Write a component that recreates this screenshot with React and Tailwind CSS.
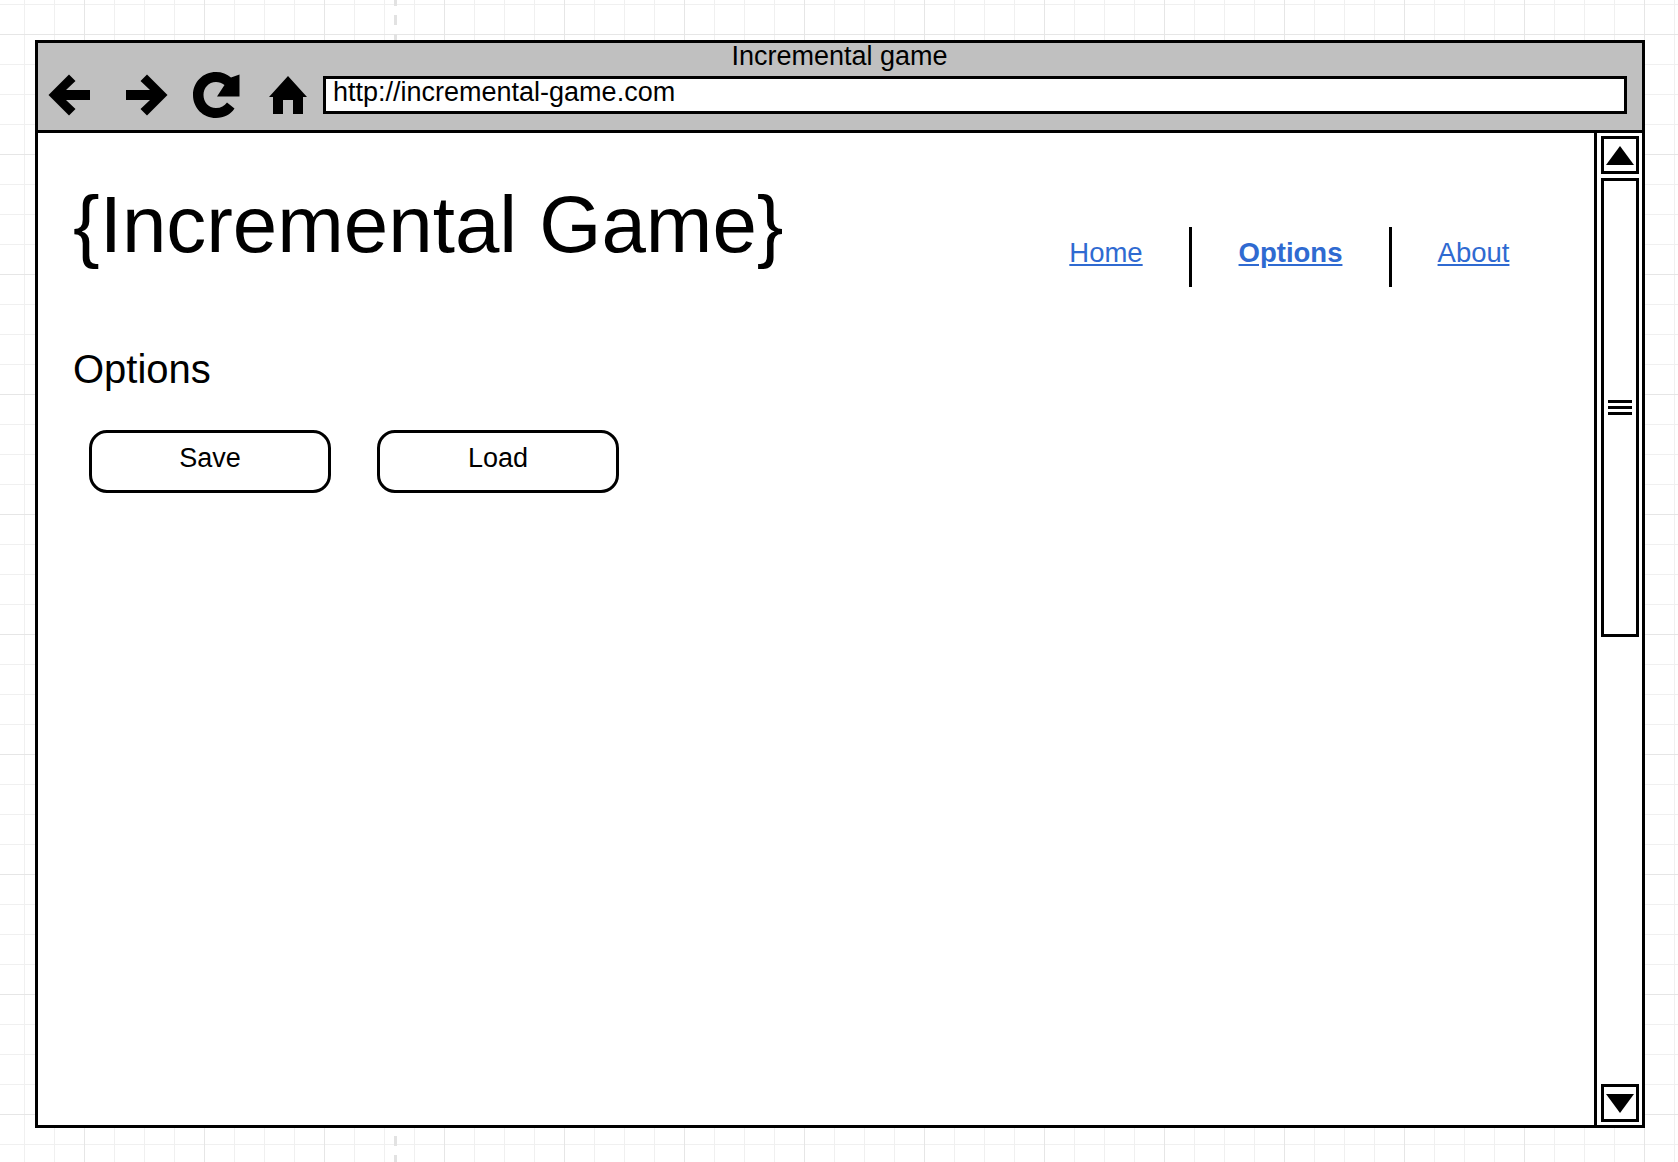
const linkClass = "text-[#2f6ad1] underline text-[27.5px] leading-8"

function BackArrow({ flip }) {
  return (
    <svg width="42" height="42" viewBox="0 0 42 42" className={flip ? "-scale-x-100" : ""}>
      <path d="M0.5 21 L21 0.5 L27.5 7 L18 16 H42 V26 H18 L27.5 35 L21 41.5 Z" fill="#000" />
    </svg>
  )
}

function ReloadIcon() {
  return (
    <svg width="47" height="46" viewBox="0 0 47 46">
      <path
        d="M23 0 C29 0 34 2 38 5.5 L46.5 2.5 V24.5 H24 L31.5 13 C29 11 26 10 23 10 C15.5 10 10.5 16 10.5 23 C10.5 30 15.5 36 23 36 C28 36 31.5 34 34 30.5 L41.5 36.5 C37.5 42.5 31 46 23 46 C10 46 0 36 0 23 C0 10 10 0 23 0 Z"
        fill="#000"
      />
    </svg>
  )
}

function HomeIcon() {
  return (
    <svg width="38" height="38" viewBox="0 0 38 38">
      <path d="M19 0 L38 21 H34 V38 H24 V24 H14 V38 H4 V21 H0 Z" fill="#000" />
    </svg>
  )
}

function ScrollButton({ down }) {
  return (
    <div className="w-[38px] h-[38px] border-[3px] border-black bg-white flex items-center justify-center">
      <svg width="28" height="19" viewBox="0 0 28 19" className={down ? "rotate-180" : ""}>
        <path d="M14 0 L28 19 H0 Z" fill="#000" />
      </svg>
    </div>
  )
}

export default function App() {
  return (
    <div
      className="relative w-[1678px] h-[1162px] bg-white pt-[40px] pl-[35px] bg-[linear-gradient(#e6e6e6_1px,transparent_1px),linear-gradient(90deg,#e6e6e6_1px,transparent_1px),linear-gradient(#f0f0f0_1px,transparent_1px),linear-gradient(90deg,#f0f0f0_1px,transparent_1px)] bg-[size:120px_120px,120px_120px,30px_30px,30px_30px] bg-[position:0_34px,84px_0,0_4px,24px_0]"
      style={{ fontFamily: '"Liberation Sans", Arial, sans-serif' }}
    >
      {/* dashed guide behind the window */}
      <div className="absolute left-[394px] top-0 w-[3px] h-full bg-[repeating-linear-gradient(180deg,#e2e2e2_0,#e2e2e2_6px,transparent_6px,transparent_15px,#e2e2e2_15px,#e2e2e2_19px)]" />

      <div className="relative w-[1610px] h-[1088px] border-[3px] border-black bg-white flex flex-col text-black">
        {/* browser toolbar */}
        <div className="h-[90px] bg-[#c0c0c0] border-b-[3px] border-black shrink-0">
          <div className="h-[27px] text-center text-[27px] leading-[27px] pr-[1px]">Incremental game</div>
          <div className="flex items-center pl-[10px] pr-[15px] h-[42px] mt-[4px]">
            <BackArrow />
            <div className="ml-[36px]">
              <BackArrow flip />
            </div>
            <div className="ml-[25px]">
              <ReloadIcon />
            </div>
            <div className="ml-[29px]">
              <HomeIcon />
            </div>
            <div className="ml-[16px] flex-1 h-[38px] border-[3px] border-black bg-white pl-[7px] text-[27px] leading-[26px]">
              http://incremental-game.com
            </div>
          </div>
        </div>

        <div className="flex flex-1 min-h-0">
          {/* page content */}
          <div className="flex-1 pl-[35px]">
            <div className="flex">
              <h1 className="text-[79.9px] leading-[92px] mt-[46px]">{"{Incremental Game}"}</h1>
              <nav className="flex items-center ml-auto mt-[94px] h-[60px]">
                <div className="w-[166px] text-center pb-[8px]"><a href="#" className={linkClass}>Home</a></div>
                <div className="w-[3px] h-[60px] bg-black" />
                <div className="w-[197px] text-center pb-[8px]"><a href="#" className={linkClass + " font-bold"}>Options</a></div>
                <div className="w-[3px] h-[60px] bg-black" />
                <div className="w-[163px] text-center pb-[8px]"><a href="#" className={linkClass}>About</a></div>
              </nav>
              <div className="w-[39px]" />
            </div>
            <h2 className="text-[40px] leading-[46px] mt-[59px]">Options</h2>
            <div className="flex gap-[46px] ml-[16px] mt-[38px]">
              <button className="w-[242px] h-[63px] border-[3px] border-black rounded-[18px] text-[27px] leading-[31px] pb-[6px]">Save</button>
              <button className="w-[242px] h-[63px] border-[3px] border-black rounded-[18px] text-[27px] leading-[31px] pb-[6px]">Load</button>
            </div>
          </div>

          {/* scrollbar */}
          <div className="w-[48px] border-l-[3px] border-black flex flex-col items-center py-[3px]">
            <ScrollButton />
            <div className="w-[38px] h-[459px] mt-[4px] border-[3px] border-black flex flex-col items-center justify-center gap-[3px]">
              <div className="w-[24px] h-[3px] bg-black" />
              <div className="w-[24px] h-[3px] bg-black" />
              <div className="w-[24px] h-[3px] bg-black" />
            </div>
            <div className="mt-auto">
              <ScrollButton down />
            </div>
          </div>
        </div>
      </div>
    </div>
  )
}
